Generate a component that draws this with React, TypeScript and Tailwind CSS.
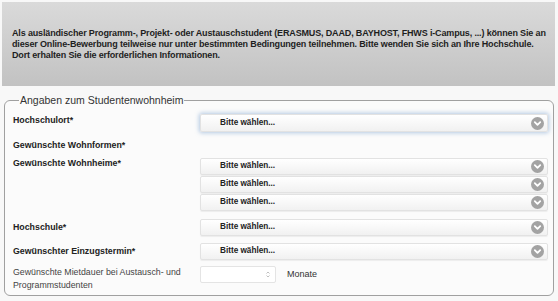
import React from 'react';

const Chevron: React.FC = () => (
  <svg width="13" height="13" viewBox="0 0 13 13" className="shrink-0">
    <circle cx="6.5" cy="6.5" r="6.5" fill="#a3a3a3" />
    <path d="M3.8 5.2 L6.5 7.9 L9.2 5.2" fill="none" stroke="#fff" strokeWidth="1.8" strokeLinecap="round" strokeLinejoin="round" />
  </svg>
);

const Select: React.FC<{ focused?: boolean }> = ({ focused }) => (
  <div
    className={
      'flex items-center justify-between h-[17px] pl-[19px] pr-[3px] rounded-[2px] border border-[#e2e2e2] bg-gradient-to-b from-white to-[#f1f1f1] ' +
      (focused ? 'h-[18px] shadow-[0_0_4px_1px_rgba(120,160,205,0.55)]' : 'shadow-[0_1px_1px_rgba(0,0,0,0.06)]')
    }
  >
    <span className="text-[8.2px] font-bold text-[#222]">Bitte wählen...</span>
    <Chevron />
  </div>
);

const Label: React.FC<{ children: React.ReactNode; bold?: boolean }> = ({ children, bold = true }) => (
  <div className={'w-[187px] shrink-0 text-[8.8px] leading-[13px] ' + (bold ? 'font-bold text-[#222]' : 'text-[#444]')}>
    {children}
  </div>
);

export default function App() {
  return (
    <div className="w-[558px] h-[301px] bg-[#f8f8f8] pt-[2px] px-[2px] font-['Liberation_Sans',Arial,sans-serif] overflow-hidden">
      <div className="h-[84px] bg-gradient-to-b from-[#dadada] to-[#c2c2c2] pl-[10px] pt-[26px] mr-[1px]">
        <p className="text-[9px] leading-[11px] tracking-[-0.15px] font-bold text-[#1e1e1e] whitespace-nowrap">
          Als ausländischer Programm-, Projekt- oder Austauschstudent (ERASMUS, DAAD, BAYHOST, FHWS i-Campus, ...) können Sie an
          <br />
          dieser Online-Bewerbung teilweise nur unter bestimmten Bedingungen teilnehmen. Bitte wenden Sie sich an Ihre Hochschule.
          <br />
          Dort erhalten Sie die erforderlichen Informationen.
        </p>
      </div>

      <fieldset className="mt-[8px] ml-[2px] w-[550px] h-[202px] border border-[#a0a0a0] rounded-[6px] bg-[#fbfbfb] pl-[8px] pr-[5px] pt-[2px]">
        <legend className="ml-[6px] px-[1px] text-[10.5px] leading-[13px] text-[#333]">Angaben zum Studentenwohnheim</legend>

        <div className="flex items-start mt-[4px]">
          <div className="pt-[1px]">
            <Label>Hochschulort*</Label>
          </div>
          <div className="flex-1 mt-[1px]">
            <Select focused />
          </div>
        </div>

        <div className="flex items-start mt-[7px] h-[18px]">
          <Label>Gewünschte Wohnformen*</Label>
        </div>

        <div className="flex items-start">
          <Label>Gewünschte Wohnheime*</Label>
          <div className="flex-1 flex flex-col gap-[1px] mt-[1px]">
            <Select />
            <Select />
            <Select />
          </div>
        </div>

        <div className="flex items-center mt-[8px]">
          <Label>Hochschule*</Label>
          <div className="flex-1">
            <Select />
          </div>
        </div>

        <div className="flex items-center mt-[7px]">
          <Label>Gewünschter Einzugstermin*</Label>
          <div className="flex-1">
            <Select />
          </div>
        </div>

        <div className="flex items-start mt-[6px]">
          <Label bold={false}>
            Gewünschte Mietdauer bei Austausch- und
            <br />
            Programmstudenten
          </Label>
          <div className="flex items-center">
            <div className="w-[76px] h-[17px] border border-[#e4e4e4] bg-white rounded-[2px] flex items-center justify-end pr-[5px]">
              <svg width="4" height="7" viewBox="0 0 4 7">
                <path d="M0.5 2.5 L2 1 L3.5 2.5 M0.5 4.5 L2 6 L3.5 4.5" fill="none" stroke="#b0b0b0" strokeWidth="0.8" />
              </svg>
            </div>
            <span className="ml-[11px] text-[9px] text-[#333]">Monate</span>
          </div>
        </div>
      </fieldset>
    </div>
  );
}
